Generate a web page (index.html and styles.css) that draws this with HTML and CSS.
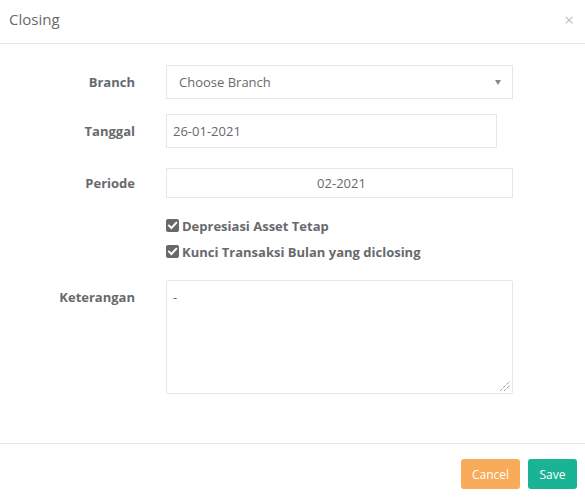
FILE: index.html
```html
<!DOCTYPE html>
<html>
<head>
<meta charset="utf-8">
<link rel="stylesheet" href="styles.css">
</head>
<body>
<div class="modal">
  <div class="modal-header">
    <h4 class="modal-title">Closing</h4>
    <span class="close">&times;</span>
  </div>
  <div class="modal-body">
    <div class="row row-branch">
      <label class="label">Branch</label>
      <div class="select">
        <span>Choose Branch</span>
        <span class="caret"></span>
      </div>
    </div>
    <div class="row row-tanggal">
      <label class="label">Tanggal</label>
      <div class="input input-short">26-01-2021</div>
    </div>
    <div class="row row-periode">
      <label class="label">Periode</label>
      <div class="input input-center">02-2021</div>
    </div>
    <div class="row row-check">
      <span></span>
      <div class="checks">
        <div class="check">
          <svg class="cb" width="13" height="13" viewBox="0 0 13 13"><rect x="0" y="0" width="13" height="13" rx="2" fill="#676a6c"/><path d="M3 6.6 L5.4 9 L10.2 3.8" stroke="#fff" stroke-width="2" fill="none" stroke-linecap="square"/></svg>
          <span>Depresiasi Asset Tetap</span>
        </div>
        <div class="check">
          <svg class="cb" width="13" height="13" viewBox="0 0 13 13"><rect x="0" y="0" width="13" height="13" rx="2" fill="#676a6c"/><path d="M3 6.6 L5.4 9 L10.2 3.8" stroke="#fff" stroke-width="2" fill="none" stroke-linecap="square"/></svg>
          <span>Kunci Transaksi Bulan yang diclosing</span>
        </div>
      </div>
    </div>
    <div class="row row-ket">
      <label class="label label-top">Keterangan</label>
      <div class="textarea">
        <span>-</span>
        <svg class="grip" width="12" height="12" viewBox="0 0 12 12"><path d="M1 11 L11 1 M5 11 L11 5" stroke="#777" stroke-width="1" stroke-dasharray="1 1"/></svg>
      </div>
    </div>
  </div>
  <div class="modal-footer">
    <button class="btn btn-warning">Cancel</button>
    <button class="btn btn-primary">Save</button>
  </div>
</div>
</body>
</html>
```
FILE: styles.css
```css
html, body {
  margin: 0;
  padding: 0;
  background: #fff;
}
body {
  font-family: "Open Sans", "Liberation Sans", sans-serif;
  font-size: 13px;
  color: #676a6c;
}
.modal {
  width: 585px;
}
.modal-header {
  height: 43px;
  border-bottom: 1px solid #e5e5e5;
  display: flex;
  align-items: center;
  justify-content: space-between;
  padding: 0 11px 0 9px;
  box-sizing: content-box;
}
.modal-title {
  margin: 0;
  font-size: 15px;
  font-weight: 400;
  color: #676a6c;
  line-height: 1;
  padding-bottom: 5px;
}
.close {
  font-size: 17px;
  color: #c2c2c2;
  line-height: 1;
  padding-bottom: 4px;
}
.modal-body {
  padding: 21px 0 0 0;
  height: 400px;
  box-sizing: border-box;
  border-bottom: 1px solid #e5e5e5;
}
.row {
  display: grid;
  grid-template-columns: 135px 347px;
  column-gap: 31px;
  align-items: center;
}
.label {
  text-align: right;
  font-weight: 700;
  color: #676a6c;
}
.label-top {
  align-self: start;
  padding-top: 8px;
}
.select, .input, .textarea {
  border: 1px solid #e5e6e7;
  box-sizing: border-box;
  color: #676a6c;
  background: #fff;
}
.select {
  height: 34px;
  display: flex;
  align-items: center;
  justify-content: space-between;
  padding: 0 11px 0 12px;
}
.caret {
  width: 0;
  height: 0;
  border-left: 3.5px solid transparent;
  border-right: 3.5px solid transparent;
  border-top: 5px solid #888;
}
.row-tanggal {
  margin-top: 15px;
}
.input {
  height: 34px;
  display: flex;
  align-items: center;
  padding: 0 6px;
}
.input-short {
  width: 331px;
}
.row-periode {
  margin-top: 20px;
}
.row-periode .input {
  height: 30px;
}
.input-center {
  justify-content: center;
  padding-left: 10px;
}
.row-check {
  margin-top: 18px;
}
.checks {
  display: flex;
  flex-direction: column;
  gap: 7px;
}
.check {
  display: flex;
  align-items: center;
  gap: 3px;
  font-weight: 700;
  height: 19px;
}
.cb {
  display: block;
}
.row-ket {
  margin-top: 19px;
}
.textarea {
  height: 114px;
  border-radius: 2px;
  position: relative;
  padding: 7px 6px;
  border-color: #e7e7e7;
}
.grip {
  position: absolute;
  right: 1px;
  bottom: 1px;
}
.modal-footer {
  display: flex;
  justify-content: flex-end;
  gap: 8px;
  padding: 15px 8px 0 0;
}
.btn {
  height: 30px;
  border: none;
  border-radius: 3px;
  color: #fff;
  font-family: "Open Sans", "Liberation Sans", sans-serif;
  font-size: 12px;
  padding: 0 11px;
}
.btn-warning {
  background: #f8ac59;
  width: 59px;
}
.btn-primary {
  background: #1ab394;
  width: 49px;
}
```
